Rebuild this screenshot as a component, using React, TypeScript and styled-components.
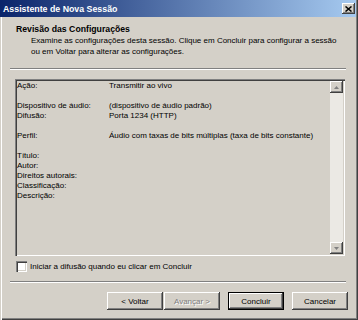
import React from "react";
import styled, { createGlobalStyle } from "styled-components";

const Global = createGlobalStyle`
  html, body { margin: 0; padding: 0; background: #d4d0c8; }
  body { width: 358px; height: 320px; overflow: hidden; font-family: "Liberation Sans", Arial, sans-serif; }
  * { box-sizing: border-box; }
`;

const Window = styled.div`
  width: 358px;
  height: 320px;
  background: #d4d0c8;
  display: flex;
  flex-direction: column;
  padding: 0 2px 2px 0;
  box-shadow: inset 1px 0 #d4d0c8, inset 2px 0 #ffffff, inset -1px -1px #404040, inset -2px -2px #808080;
  color: #000;
  font-size: 8px;
`;

const TitleBar = styled.div`
  height: 17px;
  flex: none;
  display: flex;
  align-items: center;
  justify-content: space-between;
  padding: 0 1px 0 3px;
  background: linear-gradient(to right, #0a246a, #a6caf0);
  color: #fff;
  font-weight: bold;
  font-size: 8.8px;
`;

const CloseButton = styled.div`
  width: 13px;
  height: 11px;
  display: flex;
  align-items: center;
  justify-content: center;
  background: #d4d0c8;
  box-shadow: inset -1px -1px #404040, inset 1px 1px #ffffff, inset -2px -2px #808080;
`;

const Header = styled.div`
  padding: 7px 0 0 16px;
`;

const HeaderTitle = styled.div`
  font-weight: bold;
  font-size: 8.7px;
  line-height: 11px;
`;

const HeaderText = styled.div`
  margin-top: 1px;
  padding-left: 15px;
  line-height: 10.5px;
`;

const Line = styled.span`
  display: block;
  white-space: nowrap;
`;

const Separator = styled.div<{ $top: number }>`
  margin: ${(p) => p.$top}px 10px 0 10px;
  height: 2px;
  border-top: 1px solid #808080;
  border-bottom: 1px solid #ffffff;
`;

const ListBox = styled.div`
  margin: 9px 0 0 15px;
  width: 330px;
  height: 177px;
  padding: 2px;
  display: flex;
  box-shadow: inset 1px 1px #808080, inset 2px 2px #404040, inset -1px -1px #ffffff, inset -2px -2px #d4d0c8;
`;

const Rows = styled.div`
  flex: 1;
  padding-top: 0px;
  display: grid;
  grid-template-columns: 92px 1fr;
  grid-auto-rows: 10px;
  line-height: 10px;
  align-content: start;
  white-space: nowrap;
`;

const Cell = styled.div`
  height: 10px;
`;

const ScrollBar = styled.div`
  width: 13px;
  display: flex;
  flex-direction: column;
  justify-content: space-between;
  background: #ebe9e4;
`;

const ScrollButton = styled.div`
  width: 13px;
  height: 12px;
  display: flex;
  align-items: center;
  justify-content: center;
  background: #d4d0c8;
  box-shadow: inset -1px -1px #404040, inset 1px 1px #ffffff, inset -2px -2px #808080;
`;

const CheckRow = styled.label`
  margin: 5px 0 0 16px;
  display: flex;
  align-items: center;
  gap: 3px;
  height: 11px;
  white-space: nowrap;
`;

const CheckBox = styled.span`
  width: 11px;
  height: 11px;
  background: #ffffff;
  box-shadow: inset 1px 1px #808080, inset 2px 2px #404040, inset -1px -1px #ffffff, inset -2px -2px #d4d0c8;
`;

const ButtonRow = styled.div`
  margin-top: 9px;
  padding-left: 107px;
  display: flex;
`;

const Button = styled.button<{ $lead?: number; $default?: boolean; $disabled?: boolean }>`
  width: 56px;
  height: 18px;
  margin: 0 0 0 ${(p) => p.$lead ?? 0}px;
  padding: 0;
  border: none;
  background: #d4d0c8;
  font-family: "Liberation Sans", Arial, sans-serif;
  font-size: 8px;
  color: ${(p) => (p.$disabled ? "#808080" : "#000")};
  text-shadow: ${(p) => (p.$disabled ? "1px 1px #ffffff" : "none")};
  box-shadow: ${(p) =>
    p.$default
      ? "inset 0 0 0 1px #000000, inset -2px -2px #404040, inset 2px 2px #ffffff, inset -3px -3px #808080"
      : "inset -1px -1px #404040, inset 1px 1px #ffffff, inset -2px -2px #808080"};
`;

const rows: [string, string][] = [
  ["Ação:", "Transmitir ao vivo"],
  ["", ""],
  ["Dispositivo de áudio:", "(dispositivo de áudio padrão)"],
  ["Difusão:", "Porta 1234 (HTTP)"],
  ["", ""],
  ["Perfil:", "Áudio com taxas de bits múltiplas (taxa de bits constante)"],
  ["", ""],
  ["Título:", ""],
  ["Autor:", ""],
  ["Direitos autorais:", ""],
  ["Classificação:", ""],
  ["Descrição:", ""],
];

export default function App() {
  return (
    <>
      <Global />
      <Window>
        <TitleBar>
          <span>Assistente de Nova Sessão</span>
          <CloseButton>
            <svg width="7" height="6" viewBox="0 0 7 6">
              <path d="M0.5 0.5 L6.5 5.5 M6.5 0.5 L0.5 5.5" stroke="#000" strokeWidth="1.5" />
            </svg>
          </CloseButton>
        </TitleBar>
        <Header>
          <HeaderTitle>Revisão das Configurações</HeaderTitle>
          <HeaderText>
            <Line>Examine as configurações desta sessão. Clique em Concluir para configurar a sessão</Line>
            <Line>ou em Voltar para alterar as configurações.</Line>
          </HeaderText>
        </Header>
        <Separator $top={11} />
        <ListBox>
          <Rows>
            {rows.map(([k, v], i) => (
              <React.Fragment key={i}>
                <Cell>{k}</Cell>
                <Cell>{v}</Cell>
              </React.Fragment>
            ))}
          </Rows>
          <ScrollBar>
            <ScrollButton>
              <svg width="5" height="3" viewBox="0 0 5 3">
                <path d="M2.5 0 L5 3 L0 3 Z" fill="#808080" />
              </svg>
            </ScrollButton>
            <ScrollButton>
              <svg width="5" height="3" viewBox="0 0 5 3">
                <path d="M0 0 L5 0 L2.5 3 Z" fill="#808080" />
              </svg>
            </ScrollButton>
          </ScrollBar>
        </ListBox>
        <CheckRow>
          <CheckBox />
          <span>Iniciar a difusão quando eu clicar em Concluir</span>
        </CheckRow>
        <Separator $top={9} />
        <ButtonRow>
          <Button>&lt; Voltar</Button>
          <Button $lead={1} $disabled>Avançar &gt;</Button>
          <Button $lead={8} $default>Concluir</Button>
          <Button $lead={8}>Cancelar</Button>
        </ButtonRow>
      </Window>
    </>
  );
}
